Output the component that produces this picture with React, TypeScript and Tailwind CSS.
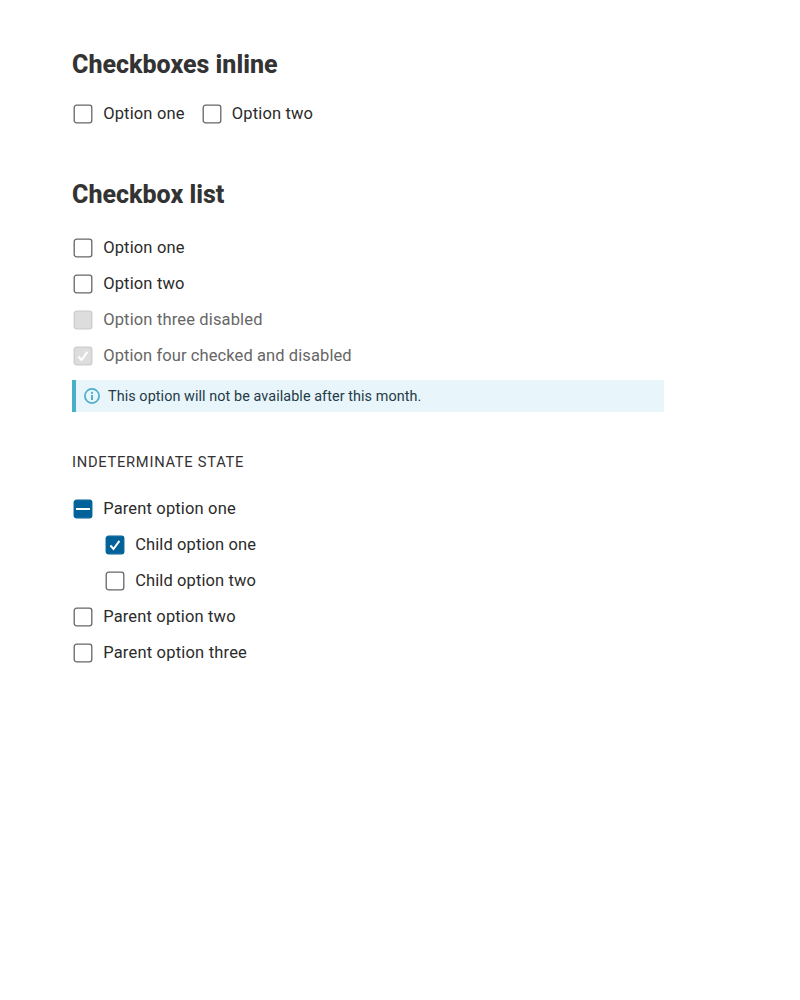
import React from 'react';

type State = 'off' | 'on' | 'mixed';

function Box({ state = 'off', disabled = false }: { state?: State; disabled?: boolean }) {
  const filled = state !== 'off';
  const fill = disabled ? '#dddddd' : filled ? '#006298' : '#ffffff';
  const stroke = disabled ? '#cccccc' : filled ? '#006298' : '#666666';
  return (
    <svg className="block h-[22px] w-[22px] shrink-0" viewBox="0 0 22 22" fill="none" aria-hidden="true">
      <rect x="2.2" y="2.2" width="17.6" height="17.6" rx="2.4" fill={fill} stroke={stroke} strokeWidth="1.3" />
      {state === 'on' && <path d="M6.4 11.5 9.5 15 15.4 6.8" stroke="#fff" strokeWidth="2" />}
      {state === 'mixed' && <path d="M4 11H18" stroke="#fff" strokeWidth="2" />}
    </svg>
  );
}

function Option({
  label,
  state,
  disabled = false,
  track = 'tracking-[0.15px]',
}: {
  label: string;
  state?: State;
  disabled?: boolean;
  track?: string;
}) {
  return (
    <label className={`flex h-6 items-start whitespace-nowrap text-[16.5px] leading-6 ${track} ${disabled ? 'text-[#666666]' : 'text-[#2b2b2b]'}`}>
      <span className="mr-[9.2px] pt-[2px]">
        <Box state={state} disabled={disabled} />
      </span>
      <span className="pt-px">{label}</span>
    </label>
  );
}

export default function App() {
  return (
    <main className="min-h-screen bg-white pt-[49px] pl-[72px] font-['Roboto','Liberation_Sans',sans-serif] text-[#333333]">
      <h2 className="h-8 text-[25px] leading-8 font-extrabold">Checkboxes inline</h2>
      <div className="mt-5 flex gap-4">
        <Option label="Option one" />
        <Option label="Option two" />
      </div>

      <h2 className="mt-[54px] h-8 text-[25px] leading-8 font-extrabold">Checkbox list</h2>
      <div className="mt-6 flex flex-col gap-3">
        <Option label="Option one" />
        <Option label="Option two" />
        <Option label="Option three disabled" disabled />
        <Option label="Option four checked and disabled" state="on" disabled track="tracking-[0.09px]" />
      </div>
      <div className="mt-[13px] flex h-8 w-[592px] items-center border-l-4 border-[#49aec8] bg-[#e8f5fb] pl-2 text-[14.4px] tracking-[0.07px] text-[#1f3b47]">
        <svg className="mr-2 h-4 w-4" viewBox="0 0 16 16" fill="none" aria-hidden="true">
          <circle cx="8" cy="8" r="7.1" stroke="#49aec8" strokeWidth="1.7" />
          <path d="M8 7V12" stroke="#49aec8" strokeWidth="1.9" />
          <circle cx="8" cy="4.9" r="1.1" fill="#49aec8" />
        </svg>
        <span className="pt-0.5">This option will not be available after this month.</span>
      </div>

      <h3 className="mt-10 h-5 text-[14.7px] leading-5 tracking-[0.73px]">INDETERMINATE STATE</h3>
      <div className="mt-6 flex flex-col gap-3">
        <Option label="Parent option one" state="mixed" />
        <div className="flex flex-col gap-3 pl-8">
          <Option label="Child option one" state="on" track="tracking-[0.1px]" />
          <Option label="Child option two" track="tracking-[0.1px]" />
        </div>
        <Option label="Parent option two" />
        <Option label="Parent option three" track="tracking-[0.19px]" />
      </div>
    </main>
  );
}
